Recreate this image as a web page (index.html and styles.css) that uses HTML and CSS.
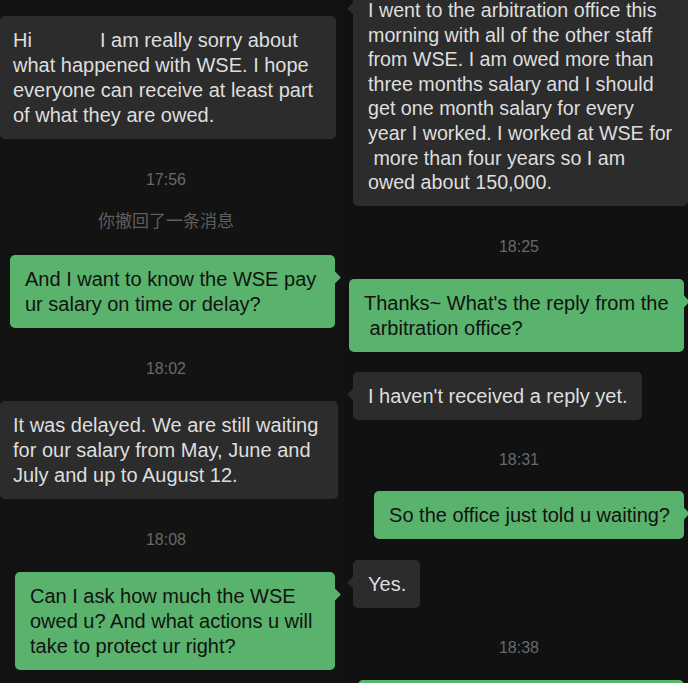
FILE: index.html
```html
<!DOCTYPE html>
<html lang="en">
<head>
<meta charset="utf-8">
<title>Chat</title>
<link rel="stylesheet" href="styles.css">
</head>
<body>
<main class="screen">
  <section class="col col-left">
    <div class="msg in m-l1">Hi<span class="redact"></span>I am really sorry about<br>what happened with WSE. I hope<br>everyone can receive at least part<br>of what they are owed.</div>
    <div class="time t-l1">17:56</div>
    <div class="recall">你撤回了一条消息</div>
    <div class="msg out m-l2">And I want to know the WSE pay<br>ur salary on time or delay?</div>
    <div class="time t-l2">18:02</div>
    <div class="msg in m-l3">It was delayed. We are still waiting<br>for our salary from May, June and<br>July and up to August 12.</div>
    <div class="time t-l3">18:08</div>
    <div class="msg out m-l4">Can I ask how much the WSE<br>owed u? And what actions u will<br>take to protect ur right?</div>
  </section>
  <section class="col col-right">
    <div class="msg in tail m-r1">I went to the arbitration office this<br>morning with all of the other staff<br>from WSE. I am owed more than<br>three months salary and I should<br>get one month salary for every<br>year I worked. I worked at WSE for<br>&nbsp;more than four years so I am<br>owed about 150,000.</div>
    <div class="time t-r1">18:25</div>
    <div class="msg out m-r2">Thanks~ What's the reply from the<br>&nbsp;arbitration office?</div>
    <div class="msg in tail m-r3">I haven't received a reply yet.</div>
    <div class="time t-r2">18:31</div>
    <div class="msg out m-r4">So the office just told u waiting?</div>
    <div class="msg in tail m-r5">Yes.</div>
    <div class="time t-r3">18:38</div>
    <div class="msg out m-r6">&nbsp;</div>
  </section>
</main>
</body>
</html>
```

FILE: styles.css
```css
* { box-sizing: border-box; }
html, body {
  margin: 0;
  padding: 0;
  background: #111111;
}
body {
  width: 688px;
  height: 683px;
  overflow: hidden;
  font-family: "Liberation Sans", Arial, "Noto Sans CJK SC", sans-serif;
}
.screen {
  display: flex;
  width: 688px;
  height: 683px;
  overflow: hidden;
}
.col {
  width: 344px;
  display: flex;
  flex-direction: column;
  align-items: flex-start;
}
.col-left {
  padding-top: 16px;
  background: #131313;
}
.col-right {
  background: #111111;
}

.msg {
  position: relative;
  font-size: 20px;
  line-height: 25px;
  padding: 12px 14px 11px 15px;
  border-radius: 5px;
  white-space: nowrap;
  flex-shrink: 0;
}
.msg.in {
  background: #2c2c2c;
  color: #dedede;
}
.msg.out {
  background: #59b36c;
  color: #121212;
}
.msg.out::after,
.msg.in.tail::after {
  content: "";
  position: absolute;
  top: 18px;
  width: 9px;
  height: 9px;
  transform: rotate(45deg);
  border-radius: 1px;
}
.msg.out::after {
  right: -4px;
  background: #59b36c;
}
.msg.in.tail::after {
  left: -4px;
  background: #2c2c2c;
}

.time, .recall {
  height: 20px;
  line-height: 20px;
  color: #696969;
  align-self: stretch;
  text-align: center;
  flex-shrink: 0;
}
.time { font-size: 16px; }
.recall {
  font-size: 17px;
  font-family: "Noto Sans CJK SC", "Liberation Sans", sans-serif;
  color: #5f5f5f;
  margin-top: 20px;
  padding-right: 12px;
}
.col-left .time { padding-right: 12px; }
.col-right .time { padding-left: 6px; }

.redact {
  display: inline-block;
  width: 68px;
}

/* left column */
.m-l1 { width: 336px; padding-left: 13px; }
.t-l1 { margin-top: 31px; }
.m-l2 { margin-top: 25px; margin-left: 10px; width: 325px; }
.t-l2 { margin-top: 31px; }
.m-l3 { margin-top: 22px; width: 338px; padding-left: 13px; }
.t-l3 { margin-top: 31px; }
.m-l4 { margin-top: 22px; margin-left: 15px; width: 320px; }

/* right column */
.m-r1 {
  margin-top: -14px;
  margin-left: 9px;
  width: 335px;
  font-size: 19.7px;
  line-height: 24.6px;
}
.t-r1 { margin-top: 31px; }
.m-r2 { margin-top: 22px; margin-left: 5px; width: 335px; }
.m-r3 { margin-top: 20px; margin-left: 9px; }
.t-r2 { margin-top: 30px; }
.m-r4 { margin-top: 21px; align-self: flex-end; margin-right: 4px; }
.m-r5 { margin-top: 21px; margin-left: 9px; }
.t-r3 { margin-top: 30px; }
.m-r6 { margin-top: 22px; margin-left: 14px; width: 326px; }
```
